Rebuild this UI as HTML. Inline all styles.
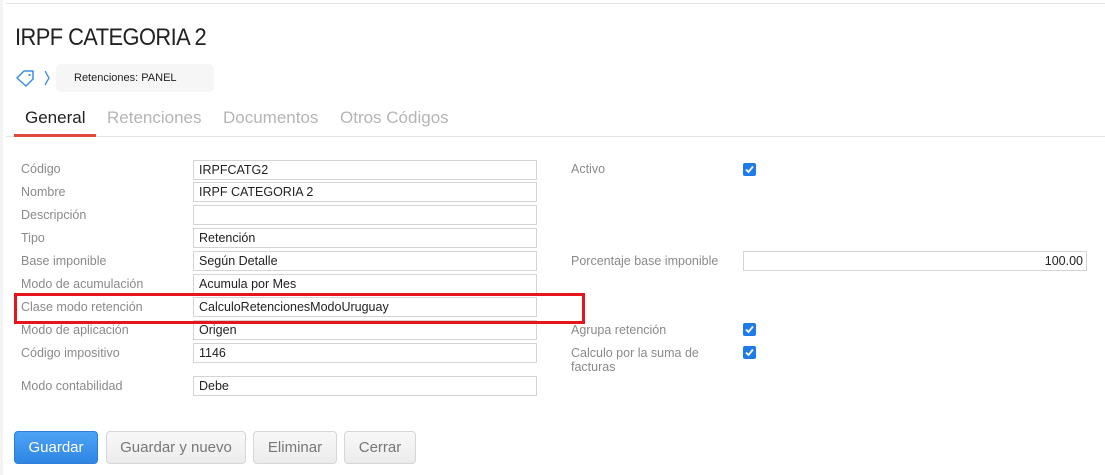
<!DOCTYPE html>
<html><head><meta charset="utf-8"><style>
*{box-sizing:border-box;margin:0;padding:0}
body{width:1105px;height:475px;background:#fff;font-family:"Liberation Sans",Arial,sans-serif;position:relative;overflow:hidden}
.a{position:absolute}
.lbl{position:absolute;left:21px;font-size:12.5px;color:#8a8a8a;white-space:nowrap}
.inp{position:absolute;left:193px;width:344px;height:20px;border:1px solid #d4d4d4;font-size:12.5px;color:#222;padding:2px 5px;line-height:15px}
.rl{position:absolute;left:571px;font-size:12.5px;color:#8a8a8a;line-height:14px}
.cb{position:absolute;left:743px;width:13px;height:13px;background:#1f7be8;border-radius:2px}
.btn{position:absolute;top:431px;height:33px;border:1px solid #d6d6d6;border-radius:4px;background:linear-gradient(#f8f8f8,#ececec);color:#777;font-size:15px;text-align:center;line-height:31px}
</style></head><body>
<div class="a" style="left:0;top:0;width:3px;height:475px;background:#f3f3f3"></div>
<div class="a" style="left:6px;top:3px;width:1099px;height:1px;background:#e2e2e2"></div>
<div class="a" style="left:15px;top:24px;font-size:24px;color:#222;letter-spacing:-0.6px;transform:scaleX(0.91);transform-origin:left">IRPF CATEGORIA 2</div>
<svg class="a" style="left:15px;top:67px" width="38" height="22" viewBox="0 0 38 22"><path d="M2 11 L9 4 L18 4 L18 12 L11 19 Z" fill="none" stroke="#3a8ee6" stroke-width="1.5" stroke-linejoin="round"/><circle cx="14.5" cy="8" r="1.1" fill="#3a8ee6"/><path d="M30 4 L34 11 L30 18" fill="none" stroke="#3a8ee6" stroke-width="1.3"/></svg>
<div class="a" style="left:56px;top:64px;width:158px;height:28px;background:#f6f6f6;border-radius:5px;font-size:11px;color:#222;padding-left:18px;line-height:28px">Retenciones: PANEL</div>
<div class="a" style="left:25px;top:108px;font-size:17px;color:#222">General</div>
<div class="a" style="left:107px;top:108px;font-size:17px;color:#b5b5b5">Retenciones</div>
<div class="a" style="left:223px;top:108px;font-size:17px;color:#b5b5b5">Documentos</div>
<div class="a" style="left:340px;top:108px;font-size:17px;color:#b5b5b5">Otros Códigos</div>
<div class="a" style="left:6px;top:136px;width:1099px;height:1px;background:#e4e4e4"></div>
<div class="a" style="left:14px;top:134px;width:82px;height:3px;background:#e0483c"></div>

<div class="lbl" style="top:162px">Código</div><div class="inp" style="top:160px">IRPFCATG2</div>
<div class="lbl" style="top:185px">Nombre</div><div class="inp" style="top:182px">IRPF CATEGORIA 2</div>
<div class="lbl" style="top:208px">Descripción</div><div class="inp" style="top:205px"></div>
<div class="lbl" style="top:231px">Tipo</div><div class="inp" style="top:228px">Retención</div>
<div class="lbl" style="top:254px">Base imponible</div><div class="inp" style="top:251px">Según Detalle</div>
<div class="lbl" style="top:277px">Modo de acumulación</div><div class="inp" style="top:274px">Acumula por Mes</div>
<div class="lbl" style="top:300px">Clase modo retención</div><div class="inp" style="top:297px">CalculoRetencionesModoUruguay</div>
<div class="lbl" style="top:323px">Modo de aplicación</div><div class="inp" style="top:320px">Origen</div>
<div class="lbl" style="top:346px">Código impositivo</div><div class="inp" style="top:343px">1146</div>
<div class="lbl" style="top:379px">Modo contabilidad</div><div class="inp" style="top:376px">Debe</div>
<div class="a" style="left:14px;top:293px;width:571px;height:31px;border:3px solid #e8141b"></div>

<div class="rl" style="top:162px">Activo</div>
<div class="cb" style="top:163px"><svg width="13" height="13"><path d="M3 6.5 L5.5 9 L10 3.5" fill="none" stroke="#fff" stroke-width="1.8"/></svg></div>
<div class="rl" style="top:254px">Porcentaje base imponible</div>
<div class="a" style="left:743px;top:251px;width:344px;height:20px;border:1px solid #d4d4d4;font-size:12.5px;color:#222;text-align:right;padding:2px 3px;line-height:15px">100.00</div>
<div class="rl" style="top:323px">Agrupa retención</div>
<div class="cb" style="top:323px"><svg width="13" height="13"><path d="M3 6.5 L5.5 9 L10 3.5" fill="none" stroke="#fff" stroke-width="1.8"/></svg></div>
<div class="rl" style="top:346px">Calculo por la suma de<br>facturas</div>
<div class="cb" style="top:346px"><svg width="13" height="13"><path d="M3 6.5 L5.5 9 L10 3.5" fill="none" stroke="#fff" stroke-width="1.8"/></svg></div>

<div class="btn" style="left:14px;width:84px;background:linear-gradient(#4da3f5,#2f86e4);border-color:#2f7fd8;color:#fff">Guardar</div>
<div class="btn" style="left:106px;width:140px">Guardar y nuevo</div>
<div class="btn" style="left:253px;width:84px">Eliminar</div>
<div class="btn" style="left:344px;width:72px">Cerrar</div>
</body></html>
